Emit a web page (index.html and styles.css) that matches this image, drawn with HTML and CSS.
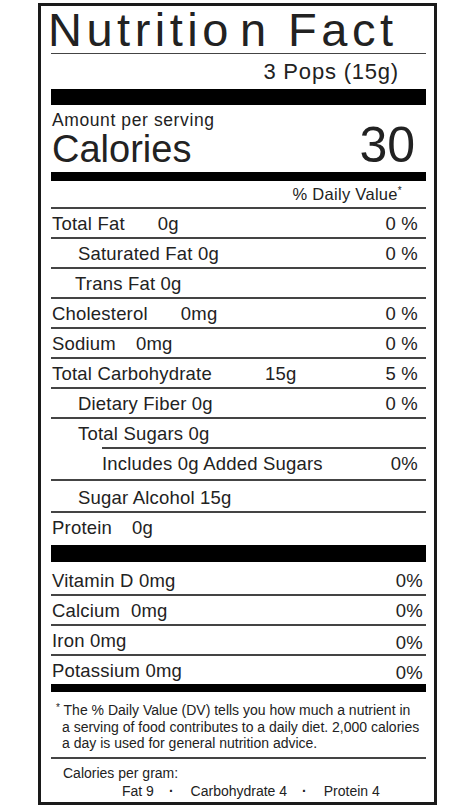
FILE: index.html
```html
<!DOCTYPE html>
<html lang="en">
<head>
    <meta charset="UTF-8">
    <meta name="viewport" content="width=device-width, initial-scale=1.0">
    <title>Nutrition Facts</title>
    <link rel="stylesheet" href="styles.css">
</head>
<body>
    <div class="label">
        <h1 class="title">Nutritio<span class="title-gap">n</span> Fact</h1>
        <div class="serving">3 Pops (15g)</div>
        <div class="bar bar-lg"></div>

        <div class="amount">Amount per serving</div>
        <div class="calories">
            <span>Calories</span>
            <span class="cal-num">30</span>
        </div>
        <div class="bar bar-md"></div>

        <div class="dv-head">% Daily Value<span class="star">*</span></div>

        <!-- Нутриенты -->
        <div class="row"><span>Total Fat<span class="amt gap-lg">0g</span></span><span>0 %</span></div>
        <div class="row indent"><span>Saturated Fat 0g</span><span>0 %</span></div>
        <div class="row indent-sm"><span>Trans Fat 0g</span></div>
        <div class="row"><span>Cholesterol<span class="amt gap-lg">0mg</span></span><span>0 %</span></div>
        <div class="row"><span>Sodium<span class="amt gap-sm">0mg</span></span><span>0 %</span></div>
        <div class="row"><span>Total Carbohydrate<span class="amt gap-xl">15g</span></span><span>5 %</span></div>
        <div class="row indent"><span>Dietary Fiber 0g</span><span>0 %</span></div>
        <div class="row indent"><span>Total Sugars 0g</span></div>
        <div class="row added"><span>Includes 0g Added Sugars</span><span>0%</span></div>
        <div class="row indent alcohol"><span>Sugar Alcohol 15g</span></div>
        <div class="row protein"><span>Protein<span class="amt gap-sm">0g</span></span></div>
        <div class="bar bar-xl"></div>

        <!-- Витамины -->
        <div class="vitamins">
            <div class="row first"><span>Vitamin D 0mg</span><span>0%</span></div>
            <div class="row"><span>Calcium&nbsp; 0mg</span><span>0%</span></div>
            <div class="row"><span>Iron 0mg</span><span class="low">0%</span></div>
            <div class="row"><span>Potassium 0mg</span><span class="low">0%</span></div>
        </div>
        <div class="bar bar-sm"></div>

        <div class="footnote">
            <span class="note-star">*</span> The % Daily Value (DV) tells you how much a nutrient in<br>
            a serving of food contributes to a daily diet. 2,000 calories<br>
            a day is used for general nutrition advice.
        </div>

        <div class="per-gram">
            <div>Calories per gram:</div>
            <div class="per-gram-list">
                <span>Fat 9</span><span class="dot">&middot;</span><span>Carbohydrate 4</span><span class="dot">&middot;</span><span>Protein 4</span>
            </div>
        </div>
    </div>
</body>
</html>
```
FILE: styles.css
```css
body {
    margin: 0;
    background-color: #fff;
    font-family: "Liberation Sans", Arial, sans-serif;
    color: #222;
}

.label {
    box-sizing: border-box;
    width: 399px;
    height: 802px;
    margin: 3px 0 0 38px;
    border: 3px solid #1a1a1a;
    padding: 0 8px 0 10px;
}

/* Заголовок */
.title {
    margin: 0;
    padding: 2px 0 1px;
    font-size: 47px;
    font-weight: normal;
    line-height: 44px;
    letter-spacing: 4.5px;
    text-indent: -3px;
    white-space: nowrap;
    border-bottom: 1px solid #444;
}

.title-gap {
    margin-left: 7px;
}

.serving {
    height: 35px;
    line-height: 35px;
    font-size: 22px;
    letter-spacing: 0.8px;
    text-align: right;
    padding-right: 27px;
}

.bar {
    background-color: #000;
}

.bar-lg { height: 16px; }
.bar-md { height: 9px; }
.bar-xl { height: 17px; }
.bar-sm { height: 8px; }

.amount {
    padding: 6px 0 0 1px;
    font-size: 17.5px;
    line-height: 19px;
    letter-spacing: 0.6px;
}

.calories {
    display: flex;
    justify-content: space-between;
    align-items: baseline;
    height: 42px;
    padding: 0 11px 0 1px;
    font-size: 38px;
    line-height: 31px;
}

.cal-num {
    font-size: 50px;
}

.dv-head {
    height: 26px;
    line-height: 26px;
    font-size: 16.5px;
    letter-spacing: 0.3px;
    text-align: right;
    padding-right: 24px;
}

.star {
    font-size: 10px;
    vertical-align: top;
    line-height: 20px;
}

/* Строки таблицы */
.row {
    display: flex;
    justify-content: space-between;
    border-top: 2px solid #444;
    padding: 1px 8px 0 1px;
    font-size: 18.5px;
    line-height: 27px;
    letter-spacing: 0.2px;
    white-space: nowrap;
}

.row.indent { padding-left: 27px; }
.row.indent-sm { padding-left: 24px; }

.row.added {
    margin-left: 51px;
    padding-left: 0;
    padding-bottom: 2px;
}

.row.alcohol { padding-top: 3px; }
.row.protein { padding-bottom: 4px; }

.amt.gap-sm { margin-left: 20px; }
.amt.gap-lg { margin-left: 33px; }
.amt.gap-xl { margin-left: 53px; }

.vitamins .row {
    padding-right: 3px;
}

.vitamins .row.first {
    border-top: none;
    padding-top: 5px;
}

.vitamins .low {
    position: relative;
    top: 2px;
}

/* Сноска */
.footnote {
    padding: 10px 0 5px 11px;
    text-indent: -6px;
    font-size: 14px;
    line-height: 16.5px;
    white-space: nowrap;
    border-bottom: 2px solid #444;
}

.note-star {
    font-size: 10px;
    vertical-align: top;
    line-height: 12px;
}

.per-gram {
    padding: 5px 0 0 12px;
    font-size: 14px;
    line-height: 18.5px;
}

.per-gram-list {
    padding-left: 59px;
}

.dot {
    margin: 0 17px 0 15px;
    font-weight: bold;
}
```
